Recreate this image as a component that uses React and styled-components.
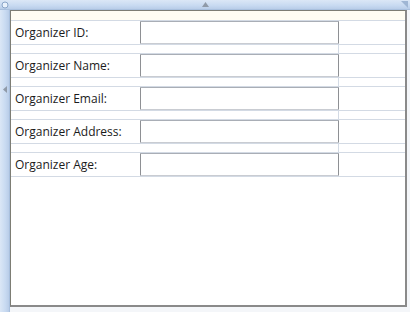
import React from 'react';
import styled, { createGlobalStyle } from 'styled-components';

const GlobalStyle = createGlobalStyle`
  html, body {
    margin: 0;
    padding: 0;
    background: #ffffff;
  }
`;

const rail = '#c8daf1';
const gridLine = '#d3dae4';

const Designer = styled.div`
  width: 410px;
  height: 312px;
  display: grid;
  grid-template-columns: 10px 397px 3px;
  grid-template-rows: 10px 297px 5px;
  background: #f4f6f9;
  overflow: hidden;
`;

const TopRail = styled.div`
  grid-column: 1 / 4;
  grid-row: 1;
  position: relative;
  background: linear-gradient(to bottom, #dbe7f6 0%, ${rail} 60%, #b9cde8 100%);
  border-bottom: 1px solid #a9c0de;
  box-sizing: border-box;
  display: flex;
  align-items: center;
  justify-content: center;
`;

const LeftRail = styled.div`
  grid-column: 1;
  grid-row: 2 / 4;
  background: linear-gradient(to right, #dbe7f6 0%, ${rail} 60%, #b9cde8 100%);
  border-right: 1px solid #a9c0de;
  box-sizing: border-box;
  display: flex;
  align-items: center;
  justify-content: center;
  padding-bottom: 144px;
`;

const Corner = styled.div`
  position: absolute;
  ${p => (p.$right ? 'right: 2px;' : 'left: 1px;')}
  top: 1px;
  line-height: 0;
`;

const Canvas = styled.div`
  grid-column: 2;
  grid-row: 2;
  background: #ffffff;
  border-left: 1px solid #7d7d74;
  border-top: 1px solid #7d7d74;
  border-right: 2px solid #8a8a8a;
  border-bottom: 2px solid #8a8a8a;
  box-sizing: border-box;
`;

const Form = styled.div`
  display: flex;
  flex-direction: column;
  background: linear-gradient(
    to right,
    transparent 327px,
    ${gridLine} 327px,
    ${gridLine} 328px,
    transparent 328px
  );
`;

const TopSpacer = styled.div`
  height: 9px;
  background: #fffdf3;
`;

const FormRow = styled.div`
  display: grid;
  grid-template-columns: 129px 199px 1fr;
  align-items: center;
  height: 23px;
  border-top: 1px solid ${gridLine};
  border-bottom: 1px solid ${gridLine};
  margin-top: ${p => (p.$first ? '0' : '8px')};
`;

const Label = styled.span`
  padding-left: 4px;
  font-family: "Open Sans", "Liberation Sans", sans-serif;
  font-size: 12px;
  color: #1b1b1b;
  white-space: nowrap;
`;

const TextBox = styled.input`
  box-sizing: border-box;
  width: 199px;
  height: 23px;
  margin: 0;
  padding: 0 3px;
  align-self: start;
  margin-top: 0;
  background: #ffffff;
  border: 1px solid #abadb3;
  border-left-color: #8e9094;
  border-top-color: #a9aeb6;
  border-bottom-color: #c9ccd2;
  border-right-color: #8e9094;
  border-radius: 1px;
  outline: none;
`;

const fields = [
  'Organizer ID:',
  'Organizer Name:',
  'Organizer Email:',
  'Organizer Address:',
  'Organizer Age:',
];

const BottomMark = styled.div`
  grid-column: 1 / 4;
  grid-row: 3;
`;

export default function App() {
  return (
    <>
      <GlobalStyle />
      <Designer>
        <TopRail>
          <Corner>
            <svg width="8" height="8" viewBox="0 0 8 8">
              <circle cx="4" cy="4" r="3" fill="#e9f1fb" stroke="#8aa5c8" strokeWidth="1" />
            </svg>
          </Corner>
          <svg width="7" height="5" viewBox="0 0 7 5">
            <path d="M3.5 0 L7 5 L0 5 Z" fill="#8f9aa8" />
          </svg>
          <Corner $right>
            <svg width="7" height="7" viewBox="0 0 7 7">
              <path d="M0 0 L7 0 L7 7 Z" fill="#9fb6d4" />
            </svg>
          </Corner>
        </TopRail>
        <LeftRail>
          <svg width="4" height="7" viewBox="0 0 4 7">
            <path d="M0 3.5 L4 0 L4 7 Z" fill="#8f9aa8" />
          </svg>
        </LeftRail>
        <Canvas>
          <Form>
            <TopSpacer />
            {fields.map((f, i) => (
              <FormRow key={f} $first={i === 0}>
                <Label>{f}</Label>
                <TextBox type="text" readOnly />
                <span />
              </FormRow>
            ))}
          </Form>
        </Canvas>
        <BottomMark />
      </Designer>
    </>
  );
}
